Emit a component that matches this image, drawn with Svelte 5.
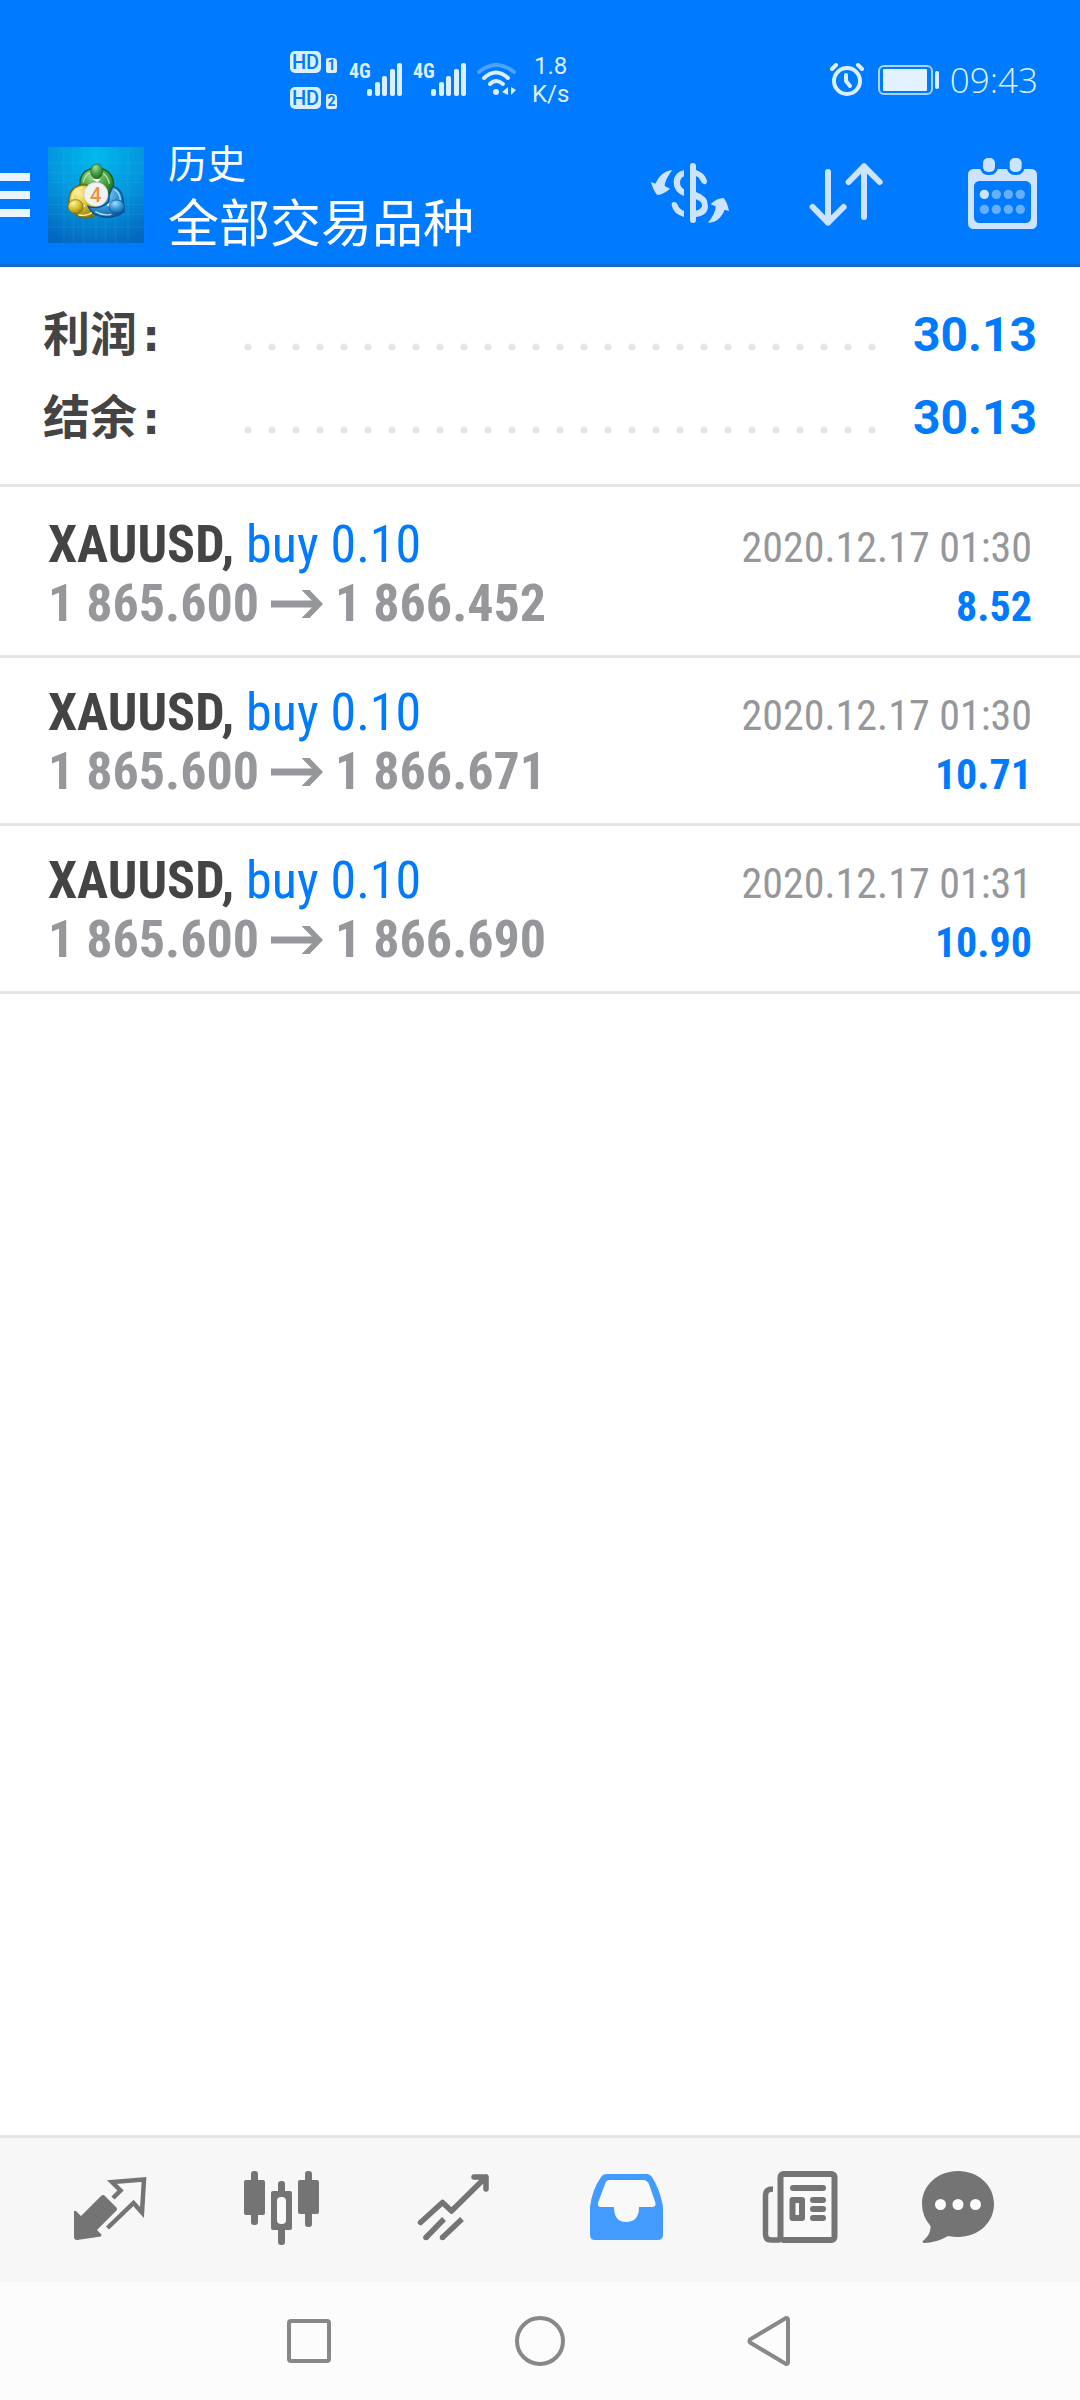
<script lang="ts">
	type Tab = 'quotes' | 'charts' | 'trade' | 'history' | 'news' | 'chat';

	let activeTab = $state<Tab>('history');

	const summary = [
		{ label: '利润:', value: '30.13' },
		{ label: '结余:', value: '30.13' }
	];

	const deals = [
		{ symbol: 'XAUUSD', side: 'buy 0.10', open: '1 865.600', close: '1 866.452', time: '2020.12.17 01:30', profit: '8.52' },
		{ symbol: 'XAUUSD', side: 'buy 0.10', open: '1 865.600', close: '1 866.671', time: '2020.12.17 01:30', profit: '10.71' },
		{ symbol: 'XAUUSD', side: 'buy 0.10', open: '1 865.600', close: '1 866.690', time: '2020.12.17 01:31', profit: '10.90' }
	];

	const tabs: { id: Tab; label: string }[] = [
		{ id: 'quotes', label: '行情' },
		{ id: 'charts', label: '图表' },
		{ id: 'trade', label: '交易' },
		{ id: 'history', label: '历史' },
		{ id: 'news', label: '新闻' },
		{ id: 'chat', label: '聊天' }
	];
</script>

{#snippet signal()}
	<div class="signal">
		<span class="net">4G</span>
		<svg width="36" height="34" viewBox="0 0 36 34" fill="#dcefff" aria-hidden="true">
			<rect x="0" y="26" width="5" height="7" rx="2" />
			<rect x="8" y="19" width="5" height="14" rx="2" />
			<rect x="15" y="13" width="5" height="20" rx="2" />
			<rect x="23" y="6" width="5" height="27" rx="2" />
			<rect x="30" y="0" width="5" height="33" rx="2" />
		</svg>
	</div>
{/snippet}

<div class="app">
	<header>
		<div class="status">
			<div class="hd-list">
				{#each [1, 2] as sim}
					<div class="hd-row">
						<span class="hd">HD</span>
						<span class="sim">{sim}</span>
					</div>
				{/each}
			</div>
			{@render signal()}
			{@render signal()}
			<svg class="wifi" width="40" height="34" viewBox="0 0 40 34" fill="none" stroke="#dcefff" stroke-width="4" stroke-linecap="round" aria-hidden="true">
				<path d="M2 9 Q19 -5 37 9" opacity="0.35" />
				<path d="M7 15 Q19 4 31 15" />
				<path d="M13 21 Q19 15 26 21" />
				<circle cx="19" cy="29" r="3" fill="#dcefff" stroke="none" />
				<path d="M31 24 V32 L25 29Z M34 24 V32 L39 27Z" fill="#dcefff" stroke="none" />
			</svg>
			<div class="speed">
				<span>1.8</span>
				<span>K/s</span>
			</div>
			<div class="status-right">
				<svg width="34" height="34" viewBox="0 0 34 34" fill="none" stroke="#dcefff" stroke-width="4" stroke-linecap="round" aria-hidden="true">
					<circle cx="17" cy="18" r="13" />
					<path d="M16 12 V18 L20 23" stroke-linejoin="round" />
					<path d="M2 6 L6 2 M28 2 L32 6" />
				</svg>
				<svg class="battery" width="62" height="30" viewBox="0 0 62 30" fill="none" aria-hidden="true">
					<rect x="1" y="1" width="53" height="28" rx="5" stroke="#a8d4ff" stroke-width="2" />
					<rect x="5" y="4" width="44" height="22" rx="1" fill="#e4f1ff" />
					<rect x="57" y="6" width="4" height="18" rx="2" fill="#dcefff" />
				</svg>
				<span class="clock">09:43</span>
			</div>
		</div>

		<div class="appbar">
			<button class="menu" aria-label="菜单">
				<span></span>
				<span></span>
				<span></span>
			</button>
			<svg class="logo" width="96" height="96" viewBox="0 0 288 288" aria-hidden="true">
				<defs>
					<radialGradient id="sky" cx="0.5" cy="0.1" r="0.95">
						<stop offset="0" stop-color="#00b9ee" />
						<stop offset="0.5" stop-color="#0497dd" />
						<stop offset="1" stop-color="#0468c0" />
					</radialGradient>
					<radialGradient id="green" cx="0.4" cy="0.25" r="0.8">
						<stop offset="0" stop-color="#a6dc9a" />
						<stop offset="0.5" stop-color="#4aa544" />
						<stop offset="1" stop-color="#17661c" />
					</radialGradient>
					<radialGradient id="yellow" cx="0.35" cy="0.25" r="0.8">
						<stop offset="0" stop-color="#fff3a0" />
						<stop offset="0.5" stop-color="#dcc332" />
						<stop offset="1" stop-color="#8d7c10" />
					</radialGradient>
					<radialGradient id="blue" cx="0.4" cy="0.25" r="0.8">
						<stop offset="0" stop-color="#a5dcfb" />
						<stop offset="0.5" stop-color="#389bdb" />
						<stop offset="1" stop-color="#0b5da6" />
					</radialGradient>
				</defs>
				<rect width="288" height="288" fill="url(#sky)" />
				<path d="M48 0V288 M77 0V288 M106 0V288 M144 0V288 M173 0V288 M202 0V288 M240 0V288 M0 48H288 M0 77H288 M0 106H288 M0 144H288 M0 173H288 M0 202H288 M0 240H288" stroke="#5cc6f5" stroke-opacity="0.2" stroke-width="2" />
				<path d="M95 112 Q96 76 126 66 L164 66 Q199 78 197 122 L190 148 Q170 140 144 106 L110 132 Q95 124 95 112Z" fill="url(#green)" stroke="#185f25" stroke-width="4" />
				<path d="M106 106 Q109 82 130 76 L144 98 L160 76 Q180 86 184 110" fill="none" stroke="#b8e5b0" stroke-width="4" />
				<path d="M64 180 Q56 122 100 114 L118 114 Q106 142 144 176 L148 198 Q132 216 104 212 Q80 208 64 180Z" fill="url(#yellow)" stroke="#79680d" stroke-width="4" />
				<path d="M72 156 Q76 126 104 122 M92 204 Q120 208 134 194" fill="none" stroke="#fff2a2" stroke-width="4" />
				<path d="M120 178 Q156 190 182 164 L184 144 L194 118 Q224 126 226 164 L228 194 Q202 214 168 210 Q132 206 120 178Z" fill="url(#blue)" stroke="#0b4f90" stroke-width="4" />
				<path d="M198 128 Q216 136 217 160 M142 194 Q164 208 190 202" fill="none" stroke="#a9def9" stroke-width="4" />
				<path d="M132 96 H158 L148 106Z M98 168 L112 176 L100 188Z M190 164 L176 174 L190 184Z" fill="#fff" />
				<ellipse cx="146" cy="73" rx="18" ry="22" fill="url(#green)" stroke="#185f25" stroke-width="2" />
				<ellipse cx="83" cy="179" rx="23" ry="21" fill="url(#yellow)" stroke="#79680d" stroke-width="2" />
				<ellipse cx="206" cy="179" rx="23" ry="20" fill="url(#blue)" stroke="#0b4f90" stroke-width="2" />
				<circle cx="144" cy="142" r="36" fill="#f2f2f2" stroke="#c9ccd0" stroke-width="2" />
				<text x="143" y="164" text-anchor="middle" class="logo-digit">4</text>
			</svg>
			<div class="titles">
				<span class="section">历史</span>
				<h1>全部交易品种</h1>
			</div>
			<div class="actions">
				<button aria-label="货币">
					<svg width="80" height="80" viewBox="0 -15 240 240" fill="#cce4ff" aria-hidden="true">
						<rect x="120" y="9" width="18" height="180" rx="9" />
						<path d="M67 30 Q44 60 44 78 L60 86 Q40 104 22 105 Q10 92 3 66 L16 71 Q32 34 67 30Z" />
						<path d="M174 188 Q197 160 197 139 L182 133 Q200 114 221 114 Q233 130 237 153 L224 149 Q208 188 174 188Z" />
						<path d="M102 30 Q71 38 71 66 Q71 96 102 108 V88 Q90 80 90 68 Q90 54 102 49Z" />
						<path d="M138 30 Q164 38 171 62 Q172 72 163 73 Q156 72 152 62 Q148 52 138 48Z" />
						<path d="M138 96 Q174 108 174 138 Q174 166 138 171 V152 Q156 148 156 136 Q156 124 138 118Z" />
						<path d="M102 171 Q70 162 65 136 Q64 126 73 126 Q80 126 83 134 Q88 148 102 152Z" />
					</svg>
				</button>
				<button aria-label="排序">
					<svg width="80" height="80" viewBox="0 0 240 240" fill="none" stroke="#cce4ff" stroke-width="18" stroke-linecap="round" stroke-linejoin="round" aria-hidden="true">
						<path d="M66 51 V203 M20 156 L66 203 L113 156" />
						<path d="M174 186 V34 M128 81 L174 34 L221 81" />
					</svg>
				</button>
				<button aria-label="日期">
					<svg width="80" height="80" viewBox="0 0 240 240" aria-hidden="true">
						<rect x="18" y="42" width="207" height="180" rx="16" fill="#cce4ff" />
						<rect x="36" y="78" width="171" height="126" rx="16" fill="#007aff" />
						{#each [63, 143] as x}
							<rect {x} y="9" width="36" height="42" rx="15" fill="#cce4ff" stroke="#007aff" stroke-width="18" paint-order="stroke" />
						{/each}
						{#each [118, 163] as cy}
							{#each [67, 103, 139, 175] as cx}
								<circle {cx} {cy} r="14" fill={cx === 67 && cy === 118 ? '#cce4ff' : '#66afff'} />
							{/each}
						{/each}
					</svg>
				</button>
			</div>
		</div>
	</header>

	<main>
		<dl class="summary">
			{#each summary as row}
				<div class="summary-row">
					<dt>{row.label}</dt>
					<dd>{row.value}</dd>
				</div>
			{/each}
		</dl>

		<ul class="deals">
			{#each deals as deal}
				<li>
					<div class="line">
						<span class="name"><b>{deal.symbol},</b> <span class="side">{deal.side}</span></span>
						<time>{deal.time}</time>
					</div>
					<div class="line">
						<span class="prices">
							<span>{deal.open}</span>
							<svg width="52" height="28" viewBox="0 0 52 28" fill="#96979b" role="img" aria-label="→">
								<path d="M0 10.500 H41 L30.500 0 H38.500 L52 14 L38.500 28 H30.500 L41 17.500 H0Z" />
							</svg>
							<span>{deal.close}</span>
						</span>
						<span class="profit">{deal.profit}</span>
					</div>
				</li>
			{/each}
		</ul>
	</main>

	<nav class="tabs">
		{#each tabs as tab}
			<button class:active={activeTab === tab.id} aria-label={tab.label} onclick={() => (activeTab = tab.id)}>
				<svg width="96" height="96" viewBox="0 0 96 96" fill="currentColor" aria-hidden="true">
					{#if tab.id === 'quotes'}
						<path d="M12 49 H14 L19 54 L39 34 Q41 32 43 34 L54 45 Q56 47 54 49 L35 68 L39.5 72.5 L39 74.5 L15 78 Q12 78 12 75Z" />
						<path d="M51 36 L58.500 28.500 L50 20 L82 17.500 L80 50.500 L71.500 41 L45.500 66" fill="none" stroke="currentColor" stroke-width="4.500" />
					{:else if tab.id === 'charts'}
						<rect x="10" y="18" width="21" height="35" rx="2" />
						<rect x="17" y="9" width="7" height="54" rx="3" />
						<rect x="37" y="29" width="21" height="39" rx="2" />
						<rect x="44" y="19" width="7" height="64" rx="3" />
						<rect x="43" y="35" width="9" height="27" rx="4" fill="#f9f9f9" />
						<rect x="64" y="18" width="21" height="34" rx="2" />
						<rect x="71" y="9" width="7" height="56" rx="3" />
					{:else if tab.id === 'trade'}
						<g fill="none" stroke="currentColor" stroke-width="5.500" stroke-linejoin="round">
							<path d="M14.500 60.500 L36.500 40.500 L45.500 49 L80 15 M68 15 H80 V27" stroke-linecap="round" />
							<path d="M20 75.500 L38 57 M36.500 75.500 L56 57" />
						</g>
						<circle cx="20" cy="75.500" r="2.800" />
						<circle cx="36.500" cy="75.500" r="2.800" />
					{:else if tab.id === 'history'}
						<path d="M28 12 H69 Q72 12 74 15 Q81 26 84 40 Q85 43 85 48 V73 Q85 78 80 78 H17 Q12 78 12 73 V45 Q14 28 23 15 Q25 12 28 12Z" />
						<path d="M32 18 H65 Q69 18 71 22 L77.500 41 Q78 45 74 45 H61 Q61 60 48 60 Q36 60 36 45 H23 Q19 45 20 41 L27 22 Q28 18 32 18Z" fill="#f9f9f9" />
					{:else if tab.id === 'news'}
						<rect x="30.500" y="12" width="54" height="66" rx="3" fill="#f9f9f9" stroke="currentColor" stroke-width="6" />
						<path d="M23 27 Q15.500 27 15.500 33 V72 Q15.500 78 21 78 H30" fill="none" stroke="currentColor" stroke-width="5.500" />
						<rect x="40" y="23" width="36" height="6" rx="3" />
						<rect x="42.500" y="38" width="9.500" height="18" fill="none" stroke="currentColor" stroke-width="6" stroke-linejoin="round" />
						<rect x="60" y="35" width="16" height="6" rx="3" />
						<rect x="60" y="44" width="16" height="6" rx="3" />
						<rect x="60" y="53" width="16" height="6" rx="3" />
					{:else}
						<path d="M36 9 C56 9 72 23 72 42 C72 61 56 75 36 75 Q31 75 26 74 Q14 81 2 81 Q-1 80 2 78 Q9 72 8.500 64 Q0 54 0 42 C0 23 16 9 36 9Z" />
						<g fill="#fcfcfc">
							<circle cx="18.500" cy="42.500" r="5.500" />
							<circle cx="36" cy="42.500" r="5.500" />
							<circle cx="53.500" cy="42.500" r="5.500" />
						</g>
					{/if}
				</svg>
			</button>
		{/each}
	</nav>

	<nav class="system">
		<button aria-label="最近">
			<svg width="60" height="60" viewBox="0 0 60 60" aria-hidden="true"><rect x="10" y="10" width="40" height="40" rx="2" /></svg>
		</button>
		<button aria-label="主屏幕">
			<svg width="60" height="60" viewBox="0 0 60 60" aria-hidden="true"><circle cx="30" cy="30" r="23" /></svg>
		</button>
		<button aria-label="返回">
			<svg width="60" height="60" viewBox="0 0 60 60" aria-hidden="true"><path d="M9 28.500 L45 7 Q47 7 47 9 V51 Q47 53 45 53 L9 31.500 Q8 30 9 28.500Z" /></svg>
		</button>
	</nav>
</div>

<style>
	:global(body) {
		margin: 0;
		background: #fff;
	}

	.app {
		min-height: 100vh;
		display: flex;
		flex-direction: column;
		font-family: Roboto, 'Noto Sans CJK SC', sans-serif;
		color: #444;
	}

	button {
		border: 0;
		padding: 0;
		background: none;
		cursor: pointer;
	}

	svg {
		display: block;
		flex-shrink: 0;
	}

	header {
		background: #007aff;
		border-bottom: 3px solid #1569cf;
		color: #fff;
	}

	.status {
		display: flex;
		align-items: center;
		height: 126px;
		padding: 34px 42px 0 290px;
		box-sizing: border-box;
		color: #dcefff;
	}

	.hd-list {
		display: flex;
		flex-direction: column;
		gap: 14px;
		margin-right: 12px;
	}

	.hd-row {
		display: flex;
		align-items: flex-end;
		gap: 5px;
	}

	.hd {
		width: 31px;
		border-radius: 5px;
		background: #dcefff;
		color: #007aff;
		font-size: 20px;
		font-weight: 500;
		line-height: 22px;
		text-align: center;
	}

	.sim {
		width: 11px;
		border-radius: 2px 4px 2px 2px;
		background: #dcefff;
		color: #007aff;
		font-size: 14px;
		font-weight: 700;
		line-height: 15px;
		text-align: center;
	}

	.signal {
		display: flex;
		align-items: flex-start;
		margin-right: 10px;
	}

	.net {
		width: 18px;
		font-family: 'Roboto Condensed', 'Liberation Sans Narrow', Roboto, sans-serif;
		font-size: 20px;
		font-weight: 700;
		line-height: 16px;
	}

	.speed {
		display: flex;
		flex-direction: column;
		margin-left: 15px;
		font-size: 24px;
		line-height: 28px;
		text-align: center;
	}

	.status-right {
		display: flex;
		align-items: center;
		margin-left: auto;
	}

	.battery {
		margin: 0 10px 0 14px;
	}

	.clock {
		font-family: 'Open Sans', 'Noto Sans', sans-serif;
		font-size: 35px;
		font-weight: 300;
		line-height: 36px;
	}

	.appbar {
		display: flex;
		align-items: center;
		height: 138px;
		padding-right: 38px;
	}

	.menu {
		display: flex;
		flex-direction: column;
		gap: 10px;
		width: 30px;
		margin-right: 18px;
	}

	.menu span {
		height: 8px;
		background: #ebf5ff;
	}

	.logo-digit {
		font-family: Roboto, sans-serif;
		font-size: 60px;
		font-weight: 500;
		fill: #f0913a;
	}

	.titles {
		display: flex;
		flex-direction: column;
		margin-left: 24px;
		line-height: 60px;
	}

	.section {
		font-size: 39px;
	}

	h1 {
		margin: 0;
		font-size: 51px;
		font-weight: 400;
	}

	.actions {
		display: flex;
		gap: 76px;
		margin-left: auto;
	}

	main {
		flex: 1;
	}

	.summary {
		margin: 0;
		padding: 26px 43px 25px;
		border-bottom: 3px solid #e5e5e5;
		font-size: 48px;
		font-weight: 700;
		line-height: 83px;
	}

	.summary-row {
		display: flex;
		align-items: baseline;
		height: 83px;
	}

	/* dotted leader between label and value */
	.summary-row::after {
		content: '';
		flex: 1;
		order: 1;
		height: 8px;
		margin-right: 32px;
		background: radial-gradient(circle at 4px 4px, #e5e5e5 3px, transparent 4px) 0 0 / 24px 8px repeat-x;
	}

	dt {
		width: 201px;
		font-family: 'DejaVu Sans Mono', 'Noto Sans CJK SC', monospace;
		font-size: 47px;
	}

	dd {
		order: 2;
		margin: 0;
		color: #007aff;
	}

	.deals {
		margin: 0;
		padding: 3px 0 0;
		list-style: none;
		font-family: 'Roboto Condensed', 'Liberation Sans Narrow', Roboto, sans-serif;
		font-size: 52px;
		line-height: 59px;
	}

	li {
		padding: 25px 48px 22px;
		border-bottom: 3px solid #e5e5e5;
	}

	.line {
		display: flex;
		align-items: baseline;
		justify-content: space-between;
		height: 59px;
	}

	.side,
	.profit {
		color: #007aff;
	}

	.prices {
		display: flex;
		align-items: center;
		gap: 12px;
		color: #96979b;
		font-weight: 700;
	}

	time {
		color: #96979b;
		font-size: 42px;
	}

	.profit {
		font-size: 42px;
		font-weight: 700;
	}

	.tabs {
		display: flex;
		padding: 24px 24px;
		border-top: 3px solid #e5e5e5;
		background: #f7f7f7;
	}

	.tabs button {
		display: flex;
		flex: 1;
		justify-content: center;
		color: #747474;
	}

	.tabs button.active {
		color: #429bff;
	}

	.system {
		display: flex;
		justify-content: center;
		padding: 29px 0;
		background: #fcfcfc;
	}

	.system button {
		display: flex;
		justify-content: center;
		width: 231px;
	}

	.system svg {
		fill: none;
		stroke: #888;
		stroke-width: 4;
	}
</style>
